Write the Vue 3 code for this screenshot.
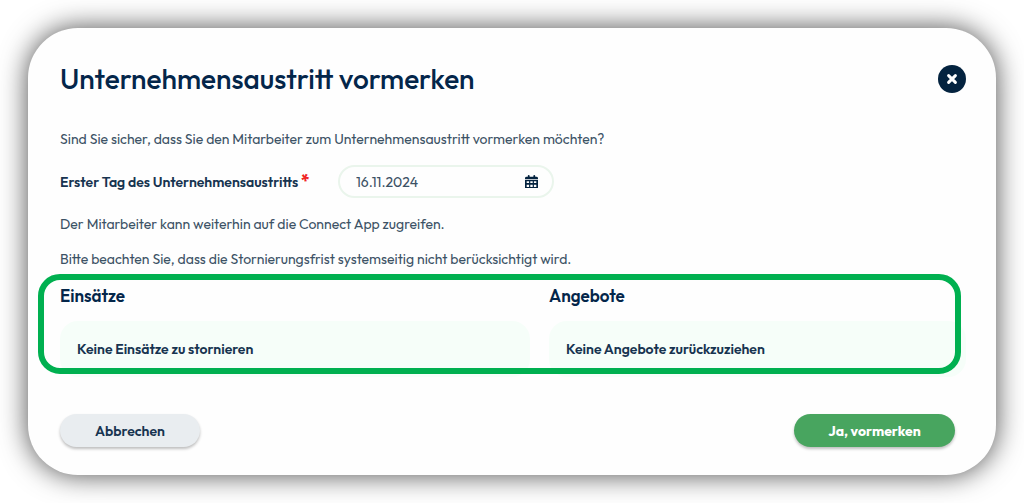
<script setup>
import { ref } from 'vue'

const exitDate = ref('16.11.2024')
const groups = [
  { title: 'Einsätze', text: 'Keine Einsätze zu stornieren' },
  { title: 'Angebote', text: 'Keine Angebote zurückzuziehen' },
]
</script>

<template>
  <main class="page">
    <section class="dialog" role="dialog" aria-labelledby="dialog-title">
      <header class="head">
        <h1 id="dialog-title">Unternehmensaustritt vormerken</h1>
        <button class="close" type="button" aria-label="Schließen">
          <svg viewBox="0 0 28 28" aria-hidden="true">
            <path d="M10.6 10.6l6.800 6.800M17.400 10.600l-6.800 6.800" fill="none" stroke="#fff" stroke-width="3" stroke-linecap="round" />
          </svg>
        </button>
      </header>

      <p class="question">Sind Sie sicher, dass Sie den Mitarbeiter zum Unternehmensaustritt vormerken möchten?</p>

      <div class="field">
        <label for="exit-date">Erster Tag des Unternehmensaustritts <span class="required">*</span></label>
        <div class="date">
          <input id="exit-date" v-model="exitDate" type="text" required />
          <button class="calendar" type="button" aria-label="Kalender öffnen">
            <svg viewBox="0 0 14 15" aria-hidden="true">
              <path fill="#04233f" fill-rule="evenodd" d="M3 1a1 1 0 0 1 2 0v1h4V1a1 1 0 0 1 2 0v1h1.200Q14 2 14 3.600V4.500H0V3.600Q0 2 1.800 2H3zM0 5.300h14V13.500q0 1.500-1.500 1.500h-11Q0 15 0 13.500zM1.800 6.600v2h2.600v-2zm3.900 0v2h2.600v-2zm3.900 0v2h2.600v-2zM1.800 10.400v2.400h2.600v-2.400zm3.900 0v2.400h2.600v-2.400zm3.900 0v2.400h2.600v-2.400z" />
            </svg>
          </button>
        </div>
      </div>

      <p class="note">Der Mitarbeiter kann weiterhin auf die Connect App zugreifen.</p>
      <p class="note">Bitte beachten Sie, dass die Stornierungsfrist systemseitig nicht berücksichtigt wird.</p>

      <div class="groups">
        <section v-for="group in groups" :key="group.title">
          <h2>{{ group.title }}</h2>
          <p class="panel">{{ group.text }}</p>
        </section>
      </div>

      <footer class="actions">
        <button class="btn cancel" type="button">Abbrechen</button>
        <button class="btn confirm" type="button">Ja, vormerken</button>
      </footer>
    </section>
  </main>
</template>

<style>
body {
  margin: 0;
  background: #fff;
}
</style>

<style scoped>
.page {
  padding: 28px;
  font-family: Outfit, Lato, "Liberation Sans", sans-serif;
  font-size: 14px;
  line-height: 20px;
  color: #3c5265;
}
.dialog {
  padding: 35px 30px 28px 32px;
  border-radius: 50px;
  background: #fefefe;
  box-shadow: 0 0 28px rgba(0, 0, 0, 0.7);
}
.head {
  display: flex;
  align-items: center;
  justify-content: space-between;
}
h1,
h2,
p {
  margin: 0;
}
h1 {
  font-size: 28px;
  line-height: 32px;
  font-weight: 500;
  color: #04264a;
}
button {
  border: 0;
  padding: 0;
  font: inherit;
  cursor: pointer;
}
.close {
  width: 28px;
  height: 28px;
  border-radius: 50%;
  background: #04233f;
}
.close svg,
.calendar svg {
  display: block;
  width: 100%;
}
.question {
  margin-top: 34px;
}
.field {
  display: flex;
  align-items: center;
  margin: 16px 0;
}
label {
  width: 278px;
  font-weight: 600;
  color: #173450;
}
.required {
  font-size: 17px;
  line-height: 16px;
  font-weight: 800;
  color: #f02525;
}
.date {
  display: flex;
  align-items: center;
  box-sizing: border-box;
  width: 216px;
  height: 33px;
  padding: 0 14px 0 16px;
  border: 2px solid #eaf5ec;
  border-radius: 17px;
}
input {
  flex: 1;
  min-width: 0;
  padding: 0;
  border: 0;
  outline: 0;
  background: none;
  font: inherit;
  color: inherit;
}
.calendar {
  width: 13px;
  background: none;
}
.note {
  margin-top: 15px;
}
.groups {
  position: relative;
  display: grid;
  grid-template-columns: 470fr 417fr;
  gap: 19px;
  margin-top: 15px;
}
.groups::after {
  content: "";
  position: absolute;
  inset: -10px 5px 3px -22px;
  border: 6px solid #00b050;
  border-radius: 22px;
  pointer-events: none;
}
h2 {
  font-size: 17px;
  line-height: 24px;
  font-weight: 600;
  color: #04264a;
}
.panel {
  margin-top: 13px;
  padding: 18px 17px;
  border-radius: 18px;
  background: #f6fef9;
  font-weight: 600;
  color: #173450;
}
.actions {
  display: flex;
  justify-content: space-between;
  margin: 37px 11px 0 0;
}
.btn {
  height: 33px;
  border-radius: 17px;
  font-weight: 600;
  box-shadow: 0 2px 3px rgba(0, 0, 0, 0.25);
}
.cancel {
  width: 140px;
  background: #e9edf0;
  color: #173450;
}
.confirm {
  width: 161px;
  background: #48a55f;
  color: #fff;
  font-weight: 700;
}
</style>
